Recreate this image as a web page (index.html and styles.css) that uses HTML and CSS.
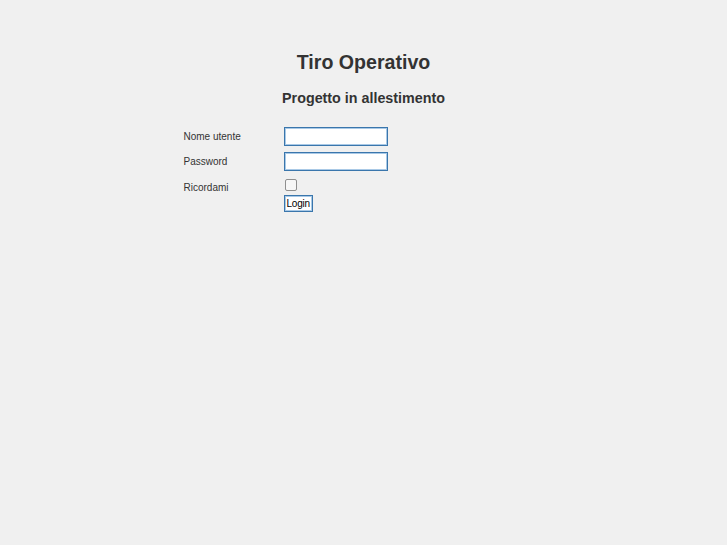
FILE: index.html
```html
<!DOCTYPE html>
<html>
<head>
<meta charset="utf-8">
<title>Tiro Operativo</title>
<link rel="stylesheet" href="styles.css">
</head>
<body>
<div class="page">
  <h1 class="title">Tiro Operativo</h1>
  <h2 class="subtitle">Progetto in allestimento</h2>
  <form class="login">
    <div class="row">
      <label class="label">Nome utente</label>
      <input class="field" type="text">
    </div>
    <div class="row">
      <label class="label">Password</label>
      <input class="field" type="password">
    </div>
    <div class="row row-check">
      <label class="label">Ricordami</label>
      <span class="check"></span>
    </div>
    <div class="row row-btn">
      <span class="label"></span>
      <button class="btn" type="button">Login</button>
    </div>
  </form>
</div>
</body>
</html>
```
FILE: styles.css
```css
html, body {
  margin: 0;
  padding: 0;
  background: #f0f0f0;
}
body {
  font-family: "Liberation Sans", Arial, sans-serif;
  color: #333;
}
.page {
  width: 360px;
  margin: 0 auto;
  padding-top: 50px;
}
.title {
  margin: 0;
  font-size: 19.6px;
  line-height: 24px;
  font-weight: bold;
  text-align: center;
  color: #333;
}
.subtitle {
  margin: 14px 0 0 0;
  font-size: 14.3px;
  line-height: 20px;
  font-weight: bold;
  text-align: center;
  color: #333;
}
.login {
  margin-top: 19px;
  display: flex;
  flex-direction: column;
  gap: 6px;
}
.row {
  display: flex;
  align-items: center;
  height: 19px;
}
.label {
  width: 100px;
  font-size: 10px;
  color: #333;
}
.field {
  box-sizing: border-box;
  width: 104px;
  height: 19px;
  margin: 0;
  padding: 0 2px;
  background: #fff;
  border: 1px solid #3a76ac;
  box-shadow: inset 0 0 0 1px #a9c9e6;
  outline: none;
}
.row-check {
  height: 13px;
  margin-top: 1px;
}
.row-check .label {
  padding-top: 6px;
}
.check {
  box-sizing: border-box;
  width: 12px;
  height: 12px;
  margin-left: 1px;
  border: 1px solid #8f8f8f;
  border-radius: 2px;
  background: #f7f7f7;
}
.row-btn {
  height: 17px;
  margin-top: -2px;
}
.btn {
  box-sizing: border-box;
  height: 17px;
  padding: 0 2px;
  margin: 0;
  font-family: "Liberation Sans", Arial, sans-serif;
  font-size: 10px;
  color: #000;
  background: #fff;
  border: 1px solid #3a76ac;
  box-shadow: inset 0 0 0 1px #a9c9e6;
  border-radius: 0;
  letter-spacing: -0.2px;
}
```
